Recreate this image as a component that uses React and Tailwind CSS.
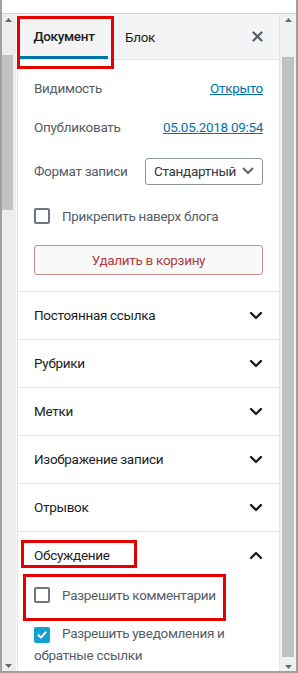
const Chevron = ({ up = false }) => (
  <svg width="14" height="9" viewBox="0 0 14 9" fill="none" className={up ? "rotate-180" : ""}>
    <path d="M2 2L7 7L12 2" stroke="#191e23" strokeWidth="2.4" strokeLinecap="round" strokeLinejoin="round" />
  </svg>
);

const Box = ({ checked = false }) =>
  checked ? (
    <span className="inline-flex w-4 h-4 rounded-[2px] bg-[#11a0d2] items-center justify-center align-[-3px] shrink-0">
      <svg width="12" height="12" viewBox="0 0 12 12" fill="none">
        <path d="M2.5 6.2L5 8.6L9.6 3.4" stroke="white" strokeWidth="2" strokeLinecap="round" strokeLinejoin="round" />
      </svg>
    </span>
  ) : (
    <span className="inline-block w-4 h-4 rounded-[2px] border-2 border-[#6c7781] shrink-0" />
  );

const Tri = ({ down = false }) => (
  <svg width="7" height="4" viewBox="0 0 7 4">
    <path d={down ? "M0 0H7L3.5 4Z" : "M0 4H7L3.5 0Z"} fill="#6b6b6b" />
  </svg>
);

const panels = ["Постоянная ссылка", "Рубрики", "Метки", "Изображение записи", "Отрывок"];

export default function App() {
  return (
    <div
      className="relative w-[298px] h-[673px] bg-white border-x-2 border-b-2 border-[#a0a0a0] flex flex-col overflow-hidden text-[13.5px] tracking-[-0.3px]"
      style={{ fontFamily: 'Roboto, "Noto Sans", sans-serif' }}
    >
      <div className="h-[14px] shrink-0 border-b border-[#d4d4d4]" />
      <div className="flex flex-1 min-h-0">
        {/* left scrollbar */}
        <div className="w-[15px] shrink-0 bg-[#ededed] flex flex-col border-r border-[#f8f8f8]">
          <div className="h-[12px] flex items-center justify-center pr-[2px]">
            <Tri />
          </div>
          <div className="mt-[29px] h-[155px] w-[11px] bg-[#c3c3c3]" />
          <div className="flex-1" />
          <div className="h-[10px] flex items-center justify-center pr-[2px]">
            <Tri down />
          </div>
        </div>

        {/* panel */}
        <div className="w-[263px] shrink-0 flex flex-col border-x border-[#e2e4e7] bg-white">
          <div className="h-[46px] shrink-0 bg-[#f3f4f5] border-b border-[#e2e4e7] flex items-stretch">
            <div className="ml-[2px] w-[88px] flex items-center justify-center border-b-[3px] border-[#0073aa] pt-[3px] text-[#191e23] font-medium">
              Документ
            </div>
            <div className="px-[17px] flex items-center text-[#191e23] pt-[1px]">Блок</div>
            <div className="flex-1" />
            <div className="w-[44px] flex items-center justify-center">
              <svg width="11" height="11" viewBox="0 0 11 11">
                <path d="M1.5 1.5L9.5 9.5M9.5 1.5L1.5 9.5" stroke="#555d66" strokeWidth="2.2" strokeLinecap="round" />
              </svg>
            </div>
          </div>

          <div className="px-4 pt-[14px] pb-[16px] border-b border-[#e2e4e7] text-[#555d66]">
            <div className="h-[28px] flex items-center justify-between">
              <span>Видимость</span>
              <span className="text-[#0073aa] underline">Открыто</span>
            </div>
            <div className="mt-[11px] h-[28px] flex items-center justify-between">
              <span>Опубликовать</span>
              <span className="text-[#0073aa] underline">05.05.2018 09:54</span>
            </div>
            <div className="mt-[9px] h-[42px] flex items-center justify-between">
              <span>Формат записи</span>
              <div className="w-[118px] h-[27px] border border-[#8d96a0] rounded-[3px] flex items-center justify-between pl-[8px] pr-[8px] text-[#32373c]">
                <span>Стандартный</span>
                <svg width="12" height="8" viewBox="0 0 12 8" fill="none">
                  <path d="M1.5 1.5L6 6L10.5 1.5" stroke="#555d66" strokeWidth="1.8" strokeLinecap="round" strokeLinejoin="round" />
                </svg>
              </div>
            </div>
            <div className="mt-[13px] h-[22px] flex items-center gap-3">
              <Box />
              <span>Прикрепить наверх блога</span>
            </div>
            <div className="mt-[18px] h-[30px] rounded-[3px] border border-[#cc8a8a] bg-[#f8f9f9] text-[#b53a3a] flex items-center justify-center">
              Удалить в корзину
            </div>
          </div>

          {panels.map((p) => (
            <div key={p} className="h-[48px] shrink-0 border-b border-[#e2e4e7] px-4 flex items-center justify-between text-[#191e23]">
              <span>{p}</span>
              <Chevron />
            </div>
          ))}

          <div className="h-[47px] shrink-0 px-4 flex items-center justify-between text-[#191e23]">
            <span>Обсуждение</span>
            <Chevron up />
          </div>
          <div className="px-4 text-[#555d66]">
            <div className="mt-[5px] h-[22px] flex items-center gap-3">
              <Box />
              <span>Разрешить комментарии</span>
            </div>
            <div className="mt-[16px] leading-[22px]">
              <Box checked />
              <span className="ml-3">Разрешить уведомления и обратные ссылки</span>
            </div>
          </div>
        </div>

        {/* right scrollbar */}
        <div className="w-[16px] shrink-0 bg-[#f0f0f0] flex flex-col items-center">
          <div className="h-[12px] flex items-center justify-center">
            <Tri />
          </div>
          <div className="mt-[31px] w-[12px] flex-1 bg-[#c1c1c1]" />
          <div className="mt-[6px] h-[8px] flex items-center justify-center">
            <Tri down />
          </div>
        </div>
      </div>

      {/* annotation boxes */}
      <div className="absolute left-[15px] top-[16px] w-[97px] h-[53px] border-[3px] border-[#e60000]" />
      <div className="absolute left-[19px] top-[540px] w-[116px] h-[28px] border-[3px] border-[#e60000]" />
      <div className="absolute left-[21px] top-[574px] w-[203px] h-[47px] border-[3px] border-[#e60000]" />
    </div>
  );
}
